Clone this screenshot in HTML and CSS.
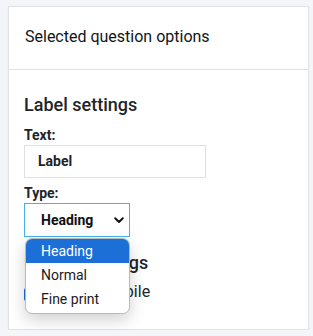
FILE: index.html
```html
<!DOCTYPE html>
<html>
<head>
<meta charset="utf-8">
<link rel="stylesheet" href="styles.css">
</head>
<body>
<div class="card">
  <div class="card-header">Selected question options</div>
  <div class="card-body">
    <h2 class="section-title">Label settings</h2>
    <label class="field-label">Text:</label>
    <div class="text-input">Label</div>
    <label class="field-label type-label">Type:</label>
    <div class="select-wrap">
      <div class="select">
        <span>Heading</span>
        <svg class="chevron" width="10" height="7" viewBox="0 0 10 7"><path d="M1.2 1.3 L5 5 L8.8 1.3" fill="none" stroke="#111" stroke-width="2" stroke-linecap="round" stroke-linejoin="round"/></svg>
      </div>
      <ul class="menu">
        <li class="option selected">Heading</li>
        <li class="option">Normal</li>
        <li class="option">Fine print</li>
      </ul>
    </div>
    <h2 class="section-title second">Mobile settings</h2>
    <label class="check-row"><input type="checkbox" checked class="check"> Hide on mobile</label>
  </div>
</div>
</body>
</html>
```
FILE: styles.css
```css
* { box-sizing: border-box; }
html, body { margin: 0; padding: 0; }
body {
  background: #f4f5f9;
  font-family: Roboto, "Liberation Sans", sans-serif;
  color: #1f2328;
}
.card {
  margin: 6px 0 0 8px;
  width: 301px;
  height: 324px;
  background: #fff;
  border: 1px solid #e1e2e6;
  box-shadow: 0 1px 3px rgba(0,0,0,0.04);
}
.card-header {
  padding: 18px 16px 20px;
  font-size: 16px;
  line-height: 24px;
  border-bottom: 1px solid #e1e2e6;
  color: #111418;
}
.card-body {
  padding: 24px 15px 0;
}
.section-title {
  margin: 0 0 9px;
  font-size: 18px;
  font-weight: 500;
  line-height: 22px;
  color: #212529;
}
.section-title.second {
  margin-top: 15px;
  margin-bottom: 8px;
}
.field-label {
  display: block;
  font-size: 14px;
  font-weight: 700;
  line-height: 20px;
  color: #212529;
}
.type-label { margin-top: 6px; line-height: 19px; }
.text-input {
  width: 182px;
  height: 33px;
  border: 1px solid #e0e0e0;
  padding: 0 13px;
  font-size: 14px;
  font-weight: 700;
  line-height: 31px;
  color: #212529;
}
.select-wrap {
  position: relative;
  width: 106px;
}
.select {
  height: 34px;
  border: 1px solid #45b3e6;
  display: flex;
  align-items: center;
  justify-content: space-between;
  padding: 0 5px 0 16px;
  font-size: 14px;
  font-weight: 700;
  color: #111;
}
.chevron { display: block; }
.menu {
  position: absolute;
  left: 1px;
  top: 35px;
  width: 105px;
  margin: 0;
  padding: 0 0 2px;
  list-style: none;
  background: #fff;
  border: 1px solid #b9b9b9;
  border-radius: 7px;
  overflow: hidden;
  box-shadow: 0 6px 16px rgba(0,0,0,0.18);
  z-index: 2;
}
.option {
  height: 24px;
  line-height: 24px;
  padding-left: 15px;
  font-size: 14px;
  color: #1b1b1b;
}
.option.selected {
  background: #1b6fd6;
  color: #fff;
}
.check-row {
  display: flex;
  align-items: flex-start;
  gap: 6px;
  font-size: 16px;
  line-height: 20px;
  color: #212529;
}
.check {
  margin: 6px 0 0;
  width: 13px;
  height: 13px;
  accent-color: #1b6fd6;
}
```
